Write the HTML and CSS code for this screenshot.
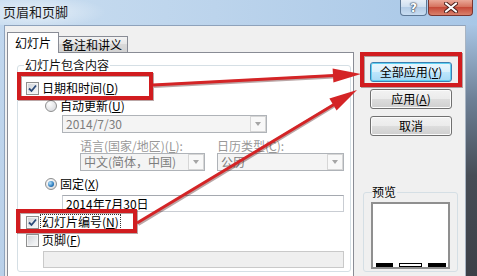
FILE: index.html
```html
<!DOCTYPE html>
<html lang="zh-CN">
<head>
<meta charset="utf-8">
<title>页眉和页脚</title>
<link rel="stylesheet" href="styles.css">
</head>
<body>
<div class="window">
  <div class="titlebar">
    <div class="title">页眉和页脚</div>
    <div class="caption">
      <div class="cap-help">?</div>
      <div class="cap-close">
        <svg viewBox="0 0 14 11" width="14" height="11">
          <path class="x-dark" d="M2 1.5 12 9.5 M12 1.5 2 9.5"/>
          <path class="x-light" d="M2 1.5 12 9.5 M12 1.5 2 9.5"/>
        </svg>
      </div>
    </div>
  </div>
  <div class="frame">
    <div class="client">
      <div class="left">
        <div class="tabs">
          <div class="tab active">幻灯片</div>
          <div class="tab">备注和讲义</div>
        </div>
        <div class="panel">
          <div class="group">
            <div class="legend">幻灯片包含内容</div>
            <div class="row r1"><span class="cb"><svg viewBox="0 0 11 11"><path d="M2 5.5 4.5 8 9 2.5"/></svg></span><span class="lbl">日期和时间(<u>D</u>)</span></div>
            <div class="row r2"><span class="rb"></span><span class="lbl">自动更新(<u>U</u>)</span></div>
            <div class="combo c1"><span class="val">2014/7/30</span><span class="drop"></span></div>
            <div class="row r3"><span class="glbl g1">语言(国家/地区)(<u>L</u>):</span><span class="glbl">日历类型(<u>C</u>):</span></div>
            <div class="combos">
              <div class="combo c2"><span class="val">中文(简体，中国)</span><span class="drop"></span></div>
              <div class="combo c3"><span class="val">公历</span><span class="drop"></span></div>
            </div>
            <div class="row r4"><span class="rb on"></span><span class="lbl">固定(<u>X</u>)</span></div>
            <div class="edit date">2014年7月30日</div>
            <div class="row r5"><span class="cb"><svg viewBox="0 0 11 11"><path d="M2 5.5 4.5 8 9 2.5"/></svg></span><span class="lbl focus">幻灯片编号(<u>N</u>)</span></div>
            <div class="row r6"><span class="cb"></span><span class="lbl">页脚(<u>F</u>)</span></div>
            <div class="edit footer"></div>
          </div>
        </div>
      </div>
      <div class="right">
        <div class="buttons">
          <div class="btn default">全部应用(<u>Y</u>)</div>
          <div class="btn">应用(<u>A</u>)</div>
          <div class="btn">取消</div>
        </div>
        <div class="pgroup">
          <div class="plegend">预览</div>
          <div class="preview">
            <span class="bar"></span>
            <span class="bar hollow"></span>
            <span class="bar wide"></span>
          </div>
        </div>
      </div>
    </div>
    <div class="rframe"></div>
  </div>
  <svg class="annot" viewBox="0 0 477 276" width="477" height="276">
    <g class="shadow">
      <rect x="20" y="75" width="132" height="24"/>
      <rect x="363" y="55" width="98" height="31"/>
      <rect x="19" y="212" width="117" height="20"/>
      <path d="M154 86 334 76.5 M138 224 334 105.5"/>
    </g>
    <g class="red">
      <rect x="19" y="74" width="132" height="24"/>
      <rect x="362" y="54" width="98" height="31"/>
      <rect x="18" y="211" width="117" height="20"/>
      <path d="M153 85 334 75.5 M137 223 334 104.5"/>
    </g>
    <polygon class="head" points="361,74 333.4,82.5 332.6,68.5"/>
    <polygon class="head" points="357,90 336.6,110.5 329.4,98.5"/>
  </svg>
</div>
</body>
</html>
```
FILE: styles.css
```css
* { box-sizing: border-box; margin: 0; padding: 0; }
html, body { width: 477px; height: 276px; overflow: hidden; }
body {
  font-family: "Noto Sans CJK SC", "Noto Sans", sans-serif;
  font-size: 12px;
  color: #000;
}
u { text-decoration: underline; text-underline-offset: 1px; }

.window {
  position: relative;
  width: 477px;
  height: 276px;
  overflow: hidden;
  display: flex;
  flex-direction: column;
  background: linear-gradient(90deg, #c9ddf0, #bcd4ec 45%, #a8c7e7);
}

/* title bar */
.titlebar {
  height: 25px;
  flex: none;
  display: flex;
  justify-content: space-between;
  align-items: flex-start;
  background: radial-gradient(ellipse 70px 16px at 36px 12px, rgba(255,255,255,.55), rgba(255,255,255,0));
}
.title { margin: 4px 0 0 3px; font-size: 13px; line-height: 16px; color: #1b1b1b; }
.caption { display: flex; gap: 1px; margin-right: 4px; }
.cap-help, .cap-close {
  height: 16px;
  border: 1px solid #5d7896;
  border-top: none;
  border-radius: 0 0 4px 4px;
  display: flex;
  align-items: center;
  justify-content: center;
}
.cap-help {
  width: 27px;
  background: linear-gradient(#e6eef7, #cfdff0 45%, #b4cce6 50%, #c8ddf2);
  color: #fff;
  font-family: "DejaVu Sans", sans-serif;
  font-weight: bold;
  font-size: 12px;
  line-height: 14px;
  text-shadow: 0 0 1px #2d3e52, 0 0 1px #2d3e52, 0 0 2px #2d3e52;
}
.cap-close {
  width: 45px;
  border-color: #7a3530;
  background: linear-gradient(#eaa898, #d6735f 45%, #c64a39 50%, #d9816c);
}
.cap-close svg { display: block; }
.x-dark { stroke: #4a1f1a; stroke-width: 4; fill: none; stroke-linecap: round; }
.x-light { stroke: #fff; stroke-width: 2.2; fill: none; stroke-linecap: round; }

/* frame & client */
.frame {
  flex: 1;
  min-height: 0;
  display: flex;
  padding-left: 4px;
  background: linear-gradient(#c1d7ee, #b9d0e9);
}
.client {
  width: 462px;
  flex: none;
  display: flex;
  background: #f0f0f0;
  border-top: 1px solid #8ea2bb;
  border-left: 1px solid #8ea2bb;
  border-right: 1px solid #a8b4c2;
}
.rframe {
  flex: 1;
  background: linear-gradient(#a9c6e5, #6d7f95 30%, #474d56 60%, #3c4047);
}

/* left: tabs + panel */
.left {
  width: 347px;
  flex: none;
  margin-left: 2px;
  padding-top: 6px;
  display: flex;
  flex-direction: column;
}
.tabs {
  display: flex;
  align-items: flex-end;
  height: 20px;
  flex: none;
  position: relative;
  z-index: 1;
}
.tab {
  height: 16px;
  width: 69px;
  border: 1px solid #898c95;
  border-bottom: none;
  border-left: none;
  padding: 0 0 0 3px;
  line-height: 15px;
  background: linear-gradient(#f3f3f3, #e6e6e6 50%, #d9d9d9 50%, #d2d2d2);
}
.tab.active {
  width: 52px;
  height: 21px;
  margin-bottom: -1px;
  border-left: 1px solid #898c95;
  padding: 2px 0 0 7px;
  line-height: 16px;
  background: #fff;
}
.panel {
  flex: none;
  height: 240px;
  background: #fff;
  border: 1px solid #898c95;
  padding-top: 12px;
}

.group {
  margin: 0 2px 0 9px;
  border: 1px solid #d5dfe5;
  border-radius: 3px;
  padding-bottom: 3px;
}
.legend {
  width: max-content;
  margin: -8px 0 0 6px;
  padding: 0 1px;
  line-height: 14px;
  background: #fff;
  color: #111;
}

.row {
  display: flex;
  align-items: center;
  height: 14px;
  line-height: 14px;
  white-space: nowrap;
}
.lbl { margin-left: 3px; }
.r1 { margin-top: 9px; padding-left: 8px; }
.r2 { margin-top: 4px; padding-left: 27px; }
.r3 { margin-top: 6px; padding-left: 62px; color: #989898; }
.r4 { margin-top: 6px; padding-left: 27px; }
.r5 { margin-top: 3px; padding-left: 8px; }
.r6 { margin-top: 4px; padding-left: 8px; }
.g1 { width: 137px; }

.focus {
  margin-left: 2px;
  padding: 0 1px;
  outline: 1px dotted #333;
  outline-offset: 0;
}

/* checkbox */
.cb {
  width: 13px;
  height: 13px;
  flex: none;
  border: 1px solid #8e8f8f;
  background: linear-gradient(135deg, #cdd0d5, #eef0f2 70%, #f7f7f7);
  box-shadow: inset 0 0 0 1px #f4f4f4;
}
.cb svg { display: block; width: 11px; height: 11px; }
.cb path { fill: none; stroke: #2b4a78; stroke-width: 1.8; }

/* radio */
.rb {
  width: 12px;
  height: 12px;
  flex: none;
  border-radius: 50%;
  border: 1px solid #8e8f8f;
  background: radial-gradient(circle at 35% 30%, #fdfdfd, #d6d8dc 90%);
  display: flex;
  align-items: center;
  justify-content: center;
}
.rb.on::after {
  content: "";
  width: 6px;
  height: 6px;
  border-radius: 50%;
  background: radial-gradient(circle at 35% 35%, #b5e2fb, #2b7bbd 60%, #1d4f83);
}

/* combo boxes (disabled) */
.combo {
  display: flex;
  height: 18px;
  border: 1px solid #afb3b8;
  background: #f4f4f4;
  color: #7d7d7d;
  line-height: 16px;
}
.combo .val { flex: 1; padding-left: 3px; white-space: nowrap; overflow: hidden; }
.combo .drop {
  width: 16px;
  flex: none;
  border: 1px solid #d6d6d6;
  background: #f8f8f8;
  display: flex;
  align-items: center;
  justify-content: center;
}
.combo .drop::after {
  content: "";
  border-left: 3.5px solid transparent;
  border-right: 3.5px solid transparent;
  border-top: 4px solid #a5a5a5;
}
.c1 { margin: 2px 0 0 44px; width: 205px; }
.combos { display: flex; gap: 12px; padding-left: 62px; }
.c2 { width: 125px; }
.c3 { width: 127px; }

/* edit boxes */
.edit {
  height: 17px;
  border: 1px solid #c9cdd3;
  border-top-color: #a5a9b0;
  background: #fff;
  line-height: 15px;
  padding-left: 3px;
}
.date { margin: 4px 0 0 44px; width: 282px; }
.footer { margin: 4px 0 0 25px; width: 301px; background: #efefef; border-color: #c9c9c9; }

/* right column */
.right {
  width: 112px;
  flex: none;
  padding-top: 36px;
  display: flex;
  flex-direction: column;
}
.buttons { display: flex; flex-direction: column; gap: 7px; padding-left: 16px; }
.btn {
  width: 82px;
  height: 20px;
  border: 1px solid #707070;
  border-radius: 3px;
  background: linear-gradient(#f2f2f2, #ebebeb 50%, #dddddd 50%, #cfcfcf);
  box-shadow: inset 0 0 0 1px #fbfbfb;
  text-align: center;
  line-height: 18px;
  white-space: nowrap;
}
.btn.default {
  border-color: #3c7fb1;
  background: linear-gradient(#eaf6fd, #d9f0fc 50%, #bee6fd 50%, #a7d9f5);
  box-shadow: inset 0 0 0 1px #5ed0f2;
}

.pgroup {
  margin: 56px 0 0 9px;
  width: 95px;
  height: 80px;
  border: 1px solid #d5dfe5;
  border-radius: 3px;
}
.plegend {
  width: max-content;
  margin: -8px 0 0 8px;
  line-height: 14px;
  background: #f0f0f0;
  padding: 0 1px 0 0;
}
.preview {
  margin: 3px 0 0 7px;
  width: 79px;
  height: 67px;
  border: 2px solid #8f8f8f;
  background: #fff;
  display: flex;
  align-items: flex-end;
  justify-content: space-between;
  padding: 0 2px 0 3px;
}
.bar { width: 17px; height: 4px; background: #000; }
.bar.hollow { width: 23px; background: #fff; border: 1px solid #000; }
.bar.wide { width: 18px; }

/* annotations */
.annot { position: absolute; left: 0; top: 0; pointer-events: none; }
.shadow rect, .shadow path { fill: none; stroke: rgba(60,0,0,.35); stroke-width: 4; }
.red rect { fill: none; stroke: #d11c1f; stroke-width: 4; }
.red path { fill: none; stroke: #d42426; stroke-width: 3; }
.head { fill: #d42426; }
```
